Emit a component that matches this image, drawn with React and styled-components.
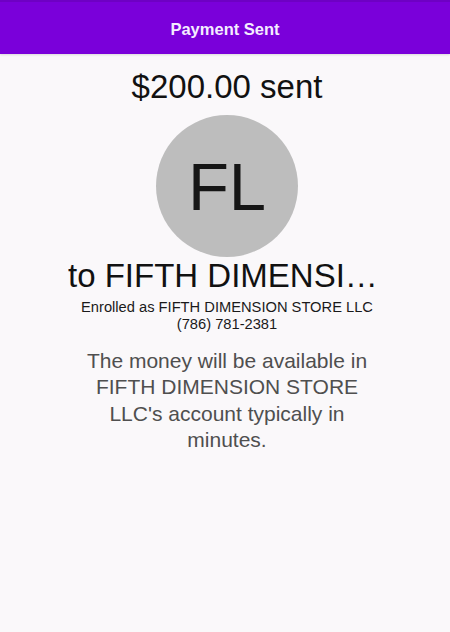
import React from 'react';
import styled, { createGlobalStyle } from 'styled-components';

const GlobalStyle = createGlobalStyle`
  html, body {
    margin: 0;
    padding: 0;
    background: #faf8fa;
  }
  body {
    font-family: "Liberation Sans", Arial, sans-serif;
  }
`;

const Screen = styled.div`
  min-height: 632px;
  background: #faf8fa;
`;

const AppBar = styled.header`
  height: 54px;
  box-sizing: border-box;
  display: flex;
  align-items: center;
  justify-content: center;
  background: #7a00da;
  border-top: 2px solid #6e00c4;
  box-shadow: 0 1px 2px rgba(0, 0, 0, 0.12);
`;

const AppBarTitle = styled.h1`
  margin: 0;
  font-size: 16.5px;
  font-weight: 700;
  color: #f4ecff;
  line-height: 20px;
  padding-top: 1px;
`;

const Content = styled.main`
  display: flex;
  flex-direction: column;
  align-items: center;
  padding: 14px 16px 0 20px;
  text-align: center;
`;

const Amount = styled.h2`
  margin: 0;
  font-size: 33px;
  font-weight: 400;
  line-height: 38px;
  color: #111;
`;

const Avatar = styled.div`
  width: 142px;
  height: 142px;
  margin-top: 9px;
  border-radius: 50%;
  background: #bdbdbd;
  display: flex;
  align-items: center;
  justify-content: center;
  font-size: 67px;
  line-height: 67px;
  color: #161616;
`;

const Recipient = styled.h3`
  margin: 0;
  max-width: 318px;
  font-size: 33px;
  font-weight: 400;
  line-height: 38px;
  color: #111;
  white-space: nowrap;
  overflow: hidden;
  text-overflow: ellipsis;
`;

const Detail = styled.p`
  margin: ${(p) => (p.$first ? '4px' : '0')} 0 0;
  font-size: 14.7px;
  line-height: 17px;
  color: #1a1a1a;
`;

const Note = styled.p`
  margin: 15px 0 0;
  max-width: 300px;
  font-size: 21px;
  line-height: 26.4px;
  color: #4f4f4f;
`;

const payment = {
  amount: '$200.00',
  initials: 'FL',
  name: 'FIFTH DIMENSION STORE LLC',
  phone: '(786) 781-2381',
};

export default function App() {
  return (
    <>
      <GlobalStyle />
      <Screen>
        <AppBar>
          <AppBarTitle>Payment Sent</AppBarTitle>
        </AppBar>
        <Content>
          <Amount>{payment.amount} sent</Amount>
          <Avatar>{payment.initials}</Avatar>
          <Recipient>to {payment.name}</Recipient>
          <Detail $first>Enrolled as {payment.name}</Detail>
          <Detail>{payment.phone}</Detail>
          <Note>
            The money will be available in {payment.name}'s account typically in minutes.
          </Note>
        </Content>
      </Screen>
    </>
  );
}
